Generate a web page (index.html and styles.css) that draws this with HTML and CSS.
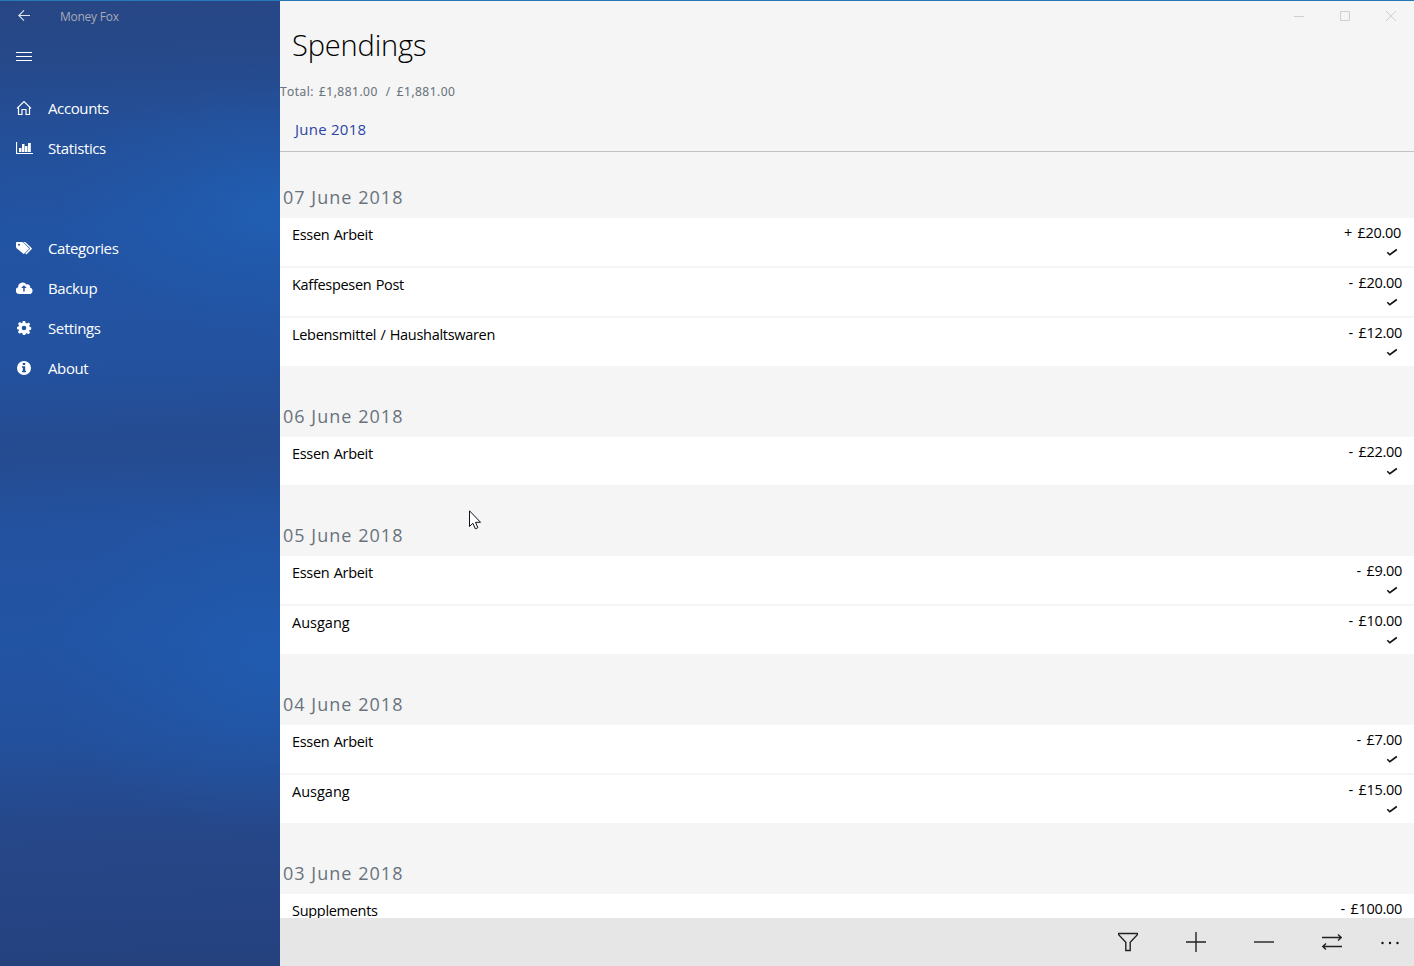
FILE: index.html
```
<!DOCTYPE html>
<html lang="en">
<head>
<meta charset="utf-8">
<title>Money Fox</title>
<link rel="stylesheet" href="styles.css">
</head>
<body>
<div class="window">
  <aside class="sidebar">
    <header class="titlebar">
      <svg class="back" width="12" height="12" viewBox="0 0 12 12"><path d="M12 5.500H.8M6 .3.8 5.500 6 10.700"/></svg>
      <span class="app-name">Money Fox</span>
    </header>
    <button class="menu" aria-label="Menu"><i></i><i></i><i></i></button>
    <nav class="nav">
      <a class="nav-item"><svg class="line" width="16" height="16" viewBox="0 0 16 16"><path d="M1 8.400 8 1.500l7 6.900M2.500 7.500v7h3.500v-5h4v5h3.500v-7"/></svg><span>Accounts</span></a>
      <a class="nav-item"><svg width="17" height="16" viewBox="0 0 17 16"><path d="M0 2h1.100v11H17v1H0zM3 8h2.500v4H3zM6 4h2.500v8H6zM9 6h2.500v6H9zM12 3h2.800v9H12z"/></svg><span>Statistics</span></a>
    </nav>
    <nav class="nav nav-secondary">
      <a class="nav-item"><svg width="17" height="16" viewBox="0 0 17 16"><path fill-rule="evenodd" d="M0 2.800Q0 2 .8 2H6q.8 0 1.500.7l5.200 5.200q.7.700 0 1.400l-4.300 4.300q-.7.700-1.400 0L.8 8.400Q0 7.600 0 6.800zM3 3.700a1 1 0 1 0 0 2 1 1 0 0 0 0-2z"/><path d="M7.300 2h1.300q.8 0 1.500.7l5.500 5.400q.6.600 0 1.200l-4.600 4.600q-.7.700-1.300 0l-.5-.4 4.300-4.300q.7-.7 0-1.400z"/></svg><span>Categories</span></a>
      <a class="nav-item"><svg width="17" height="16" viewBox="0 0 17 16"><path fill-rule="evenodd" d="M3.500 14A3.500 3.500 0 0 1 2.100 7.200 4.600 4.600 0 0 1 10.500 4.600 2.500 2.500 0 0 1 14 7.500 3.300 3.300 0 0 1 13 14zM7.900 5.200 5.200 8h2v3.500h1.500V8h2z"/></svg><span>Backup</span></a>
      <a class="nav-item"><svg width="16" height="16" viewBox="0 0 16 16"><path fill-rule="evenodd" d="M6.800 1h2.400l.4 1.900 1.300.5 1.600-1 1.700 1.700-1 1.600.5 1.200 1.500.3v2.300l-1.600.4-.5 1.200 1 1.600-1.700 1.600-1.600-1-1.200.5L9.200 15H6.800l-.4-1.700-1.300-.5-1.600 1-1.600-1.700 1-1.600-.5-1.200L1 9.200V6.900l1.500-.3.5-1.300-1-1.600 1.700-1.600 1.500 1 1.200-.4zM8 5.700a2.300 2.300 0 1 0 0 4.600 2.300 2.300 0 0 0 0-4.600z"/></svg><span>Settings</span></a>
      <a class="nav-item"><svg width="16" height="16" viewBox="0 0 16 16"><path fill-rule="evenodd" d="M8 1a7 7 0 1 0 0 14A7 7 0 0 0 8 1zM6.800 3h2.400v2H6.800zM6 6.300h3.200v4.500H10v1.500H6v-1.500h.9v-3H6z"/></svg><span>About</span></a>
    </nav>
  </aside>

  <main class="main">
    <div class="controls">
      <svg width="12" height="12"><path d="M1 6.500h10"/></svg>
      <svg width="12" height="12"><path d="M1.500 1.500h9v9h-9z"/></svg>
      <svg width="12" height="12"><path d="m1 1 10 10M11 1 1 11"/></svg>
    </div>
    <h1 class="title">Spendings</h1>
    <p class="total"><span>Total:</span><span>£1,881.00</span><span class="slash">/</span><span>£1,881.00</span></p>
    <div class="month"><span>June 2018</span></div>

    <div class="list">
      <section class="group">
        <h2>07 June 2018</h2>
        <article class="row"><span>Essen Arbeit</span><div class="amount plus"><span>+ £20.00</span><svg viewBox="0 0 12 8"><path d="m1.300 4.200 2.500 2.500 7-5.200"/></svg></div></article>
        <article class="row"><span>Kaffespesen Post</span><div class="amount"><span>- £20.00</span><svg viewBox="0 0 12 8"><path d="m1.300 4.200 2.500 2.500 7-5.200"/></svg></div></article>
        <article class="row"><span>Lebensmittel / Haushaltswaren</span><div class="amount"><span>- £12.00</span><svg viewBox="0 0 12 8"><path d="m1.300 4.200 2.500 2.500 7-5.200"/></svg></div></article>
      </section>
      <section class="group">
        <h2>06 June 2018</h2>
        <article class="row"><span>Essen Arbeit</span><div class="amount"><span>- £22.00</span><svg viewBox="0 0 12 8"><path d="m1.300 4.200 2.500 2.500 7-5.200"/></svg></div></article>
      </section>
      <section class="group">
        <h2>05 June 2018</h2>
        <article class="row"><span>Essen Arbeit</span><div class="amount"><span>- £9.00</span><svg viewBox="0 0 12 8"><path d="m1.300 4.200 2.500 2.500 7-5.200"/></svg></div></article>
        <article class="row"><span class="wide">Ausgang</span><div class="amount"><span>- £10.00</span><svg viewBox="0 0 12 8"><path d="m1.300 4.200 2.500 2.500 7-5.200"/></svg></div></article>
      </section>
      <section class="group">
        <h2>04 June 2018</h2>
        <article class="row"><span>Essen Arbeit</span><div class="amount"><span>- £7.00</span><svg viewBox="0 0 12 8"><path d="m1.300 4.200 2.500 2.500 7-5.200"/></svg></div></article>
        <article class="row"><span class="wide">Ausgang</span><div class="amount"><span>- £15.00</span><svg viewBox="0 0 12 8"><path d="m1.300 4.200 2.500 2.500 7-5.200"/></svg></div></article>
      </section>
      <section class="group">
        <h2>03 June 2018</h2>
        <article class="row"><span>Supplements</span><div class="amount"><span>- £100.00</span></div></article>
      </section>
    </div>

    <footer class="commands">
      <svg width="20" height="20" viewBox="0 0 20 20"><path d="M.6 1.500h18.800v1.200l-7.200 7.500v8.300H7.800v-8.300L.6 2.700z"/></svg>
      <svg width="20" height="20" viewBox="0 0 20 20"><path d="M0 10h20M10 0v20"/></svg>
      <svg width="20" height="20" viewBox="0 0 20 20"><path d="M0 10h20"/></svg>
      <svg width="20" height="20" viewBox="0 0 20 20"><path d="M0 5.500h19M16 2.500l3.200 3-3.200 3M20 14.500H1M4 11.500l-3.200 3 3.200 3"/></svg>
      <svg class="more" width="20" height="20" viewBox="0 0 20 20"><circle cx="2.500" cy="11" r="1.200"/><circle cx="10" cy="11" r="1.200"/><circle cx="17.500" cy="11" r="1.200"/></svg>
    </footer>
  </main>
  <svg class="cursor" width="13" height="20" viewBox="0 0 13 20"><path d="M.5.8v15.700l3.400-3.300 2.400 5.600 2.600-1.100-2.400-5.400h5z"/></svg>
</div>
</body>
</html>
```
FILE: styles.css
```
* { box-sizing: border-box; margin: 0; padding: 0; }
body { font: 15px/20px "Open Sans", "Noto Sans", sans-serif; color: #000; overflow: hidden; }
.window { position: relative; display: flex; width: 1414px; height: 966px; border-top: 1px solid #2678b8; background: #f5f5f5; }

.sidebar {
  width: 280px; flex: none; color: #fff;
  background:
    radial-gradient(ellipse 230px 130px at 280px 210px, rgba(32,98,184,.75), rgba(32,98,184,.3) 50%, rgba(32,98,184,0)),
    radial-gradient(ellipse 230px 180px at 270px 660px, rgba(32,94,180,.75), rgba(32,94,180,.3) 50%, rgba(32,94,180,0)),
    linear-gradient(178deg, #274684 0, #26498a 60px, #244f98 130px, #2254a4 230px, #2352a0 360px, #254b90 450px, #2352a0 530px, #2254a4 640px, #23509c 740px, #264789 830px, #25427f 965px);
}
.titlebar { display: flex; align-items: center; height: 31px; padding-left: 18px; }
.back { fill: none; stroke: #dce2ed; stroke-width: 1.1; margin-top: -1px; }
.app-name { margin: 1px 0 0 30px; font-size: 12px; line-height: 16px; color: #a5abb8; letter-spacing: -.25px; }
.menu { display: grid; gap: 3px; width: 48px; padding: 20px 16px 19px; height: 48px; border: 0; background: none; }
.menu i { height: 1px; background: #fff; }
.nav { padding-top: 8px; }
.nav-secondary { padding-top: 60px; }
.nav-item { display: flex; align-items: center; height: 40px; padding-left: 16px; letter-spacing: -.38px; }
.nav-item svg { flex: none; fill: #fff; }
.nav-item svg.line { fill: none; stroke: #fff; stroke-width: 1.2; }
.nav-item span { margin-left: 16px; }
.nav-item svg[width="17"] + span { margin-left: 15px; }

.main { flex: 1; display: flex; flex-direction: column; min-width: 0; }
.controls { display: flex; justify-content: flex-end; gap: 34px; height: 23px; padding: 9px 17px 0 0; }
.controls svg { flex: none; fill: none; stroke: #cfcfcf; }
.title { height: 58px; padding-left: 12px; font-size: 29px; font-weight: 300; line-height: 42px; letter-spacing: -.15px; }
.total { display: flex; gap: 5px; height: 27px; font-size: 12px; line-height: 20px; letter-spacing: .5px; color: #69737d; -webkit-text-stroke: .15px #69737d; }
.slash { margin: 0 1px 0 3px; }
.month { height: 43px; padding: 10px 0 0 15px; color: #2b45a5; letter-spacing: .25px; border-bottom: 1px solid #c2c2c2; }

.list { flex: 1; min-height: 0; overflow: hidden; }
.group h2 { display: flex; align-items: flex-end; height: 71px; padding: 0 0 9px 3px; font-size: 18px; line-height: 24px; font-weight: 400; letter-spacing: 1.03px; color: #69737d; }
.group:first-child h2 { height: 66px; }
.row { display: flex; justify-content: space-between; height: 48px; padding: 7px 12px 0; background: #fff; font-size: 14.500px; letter-spacing: -.3px; word-spacing: .8px; }
.row + .row { margin-top: 2px; }
.wide { letter-spacing: 0; }
.amount { display: flex; flex-direction: column; align-items: flex-end; margin-top: -2px; word-spacing: 2.200px; }
.amount.plus > span { margin-right: 1px; }
.amount svg { width: 12px; height: 8px; margin: 5px 4px 0 0; fill: none; stroke: #111; stroke-width: 1.6; }
.commands { display: flex; flex: none; align-items: center; justify-content: flex-end; gap: 48px; height: 48px; padding-right: 14px; background: #e6e6e6; }
.commands svg { fill: none; stroke: #222; stroke-width: 1.4; }
.commands .more { margin-left: -10px; fill: #111; stroke: none; }
.cursor { position: absolute; left: 469px; top: 509px; fill: #fff; stroke: #10101c; }
```
